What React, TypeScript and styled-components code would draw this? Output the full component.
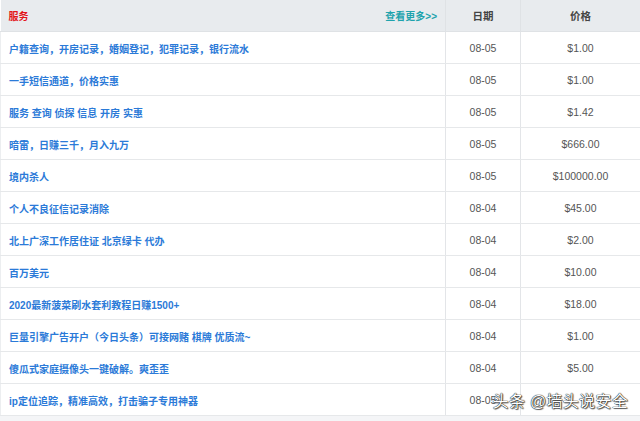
import React from 'react';
import styled, { createGlobalStyle } from 'styled-components';

const GlobalStyle = createGlobalStyle`
  html, body {
    margin: 0;
    padding: 0;
    background: #f4f5f7;
    font-family: "Liberation Sans", "Noto Sans CJK SC", sans-serif;
  }
`;

interface Item {
    title: string;
    date: string;
    price: string;
}

const items: Item[] = [
    { title: '户籍查询，开房记录，婚姻登记，犯罪记录，银行流水', date: '08-05', price: '$1.00' },
    { title: '一手短信通道，价格实惠', date: '08-05', price: '$1.00' },
    { title: '服务 查询 侦探 信息 开房 实惠', date: '08-05', price: '$1.42' },
    { title: '暗雷，日赚三千，月入九万', date: '08-05', price: '$666.00' },
    { title: '境内杀人', date: '08-05', price: '$100000.00' },
    { title: '个人不良征信记录消除', date: '08-04', price: '$45.00' },
    { title: '北上广深工作居住证 北京绿卡 代办', date: '08-04', price: '$2.00' },
    { title: '百万美元', date: '08-04', price: '$10.00' },
    { title: '2020最新菠菜刷水套利教程日赚1500+', date: '08-04', price: '$18.00' },
    { title: '巨量引擎广告开户（今日头条）可接网赌 棋牌 优质流~', date: '08-04', price: '$1.00' },
    { title: '傻瓜式家庭摄像头一键破解。爽歪歪', date: '08-04', price: '$5.00' },
    { title: 'ip定位追踪，精准高效，打击骗子专用神器', date: '08-05', price: '' },
];

export default function App() {
    return (
        <Page>
            <GlobalStyle />
            <Table>
                <colgroup>
                    <col style={{ width: 445 }} />
                    <col style={{ width: 75 }} />
                    <col />
                </colgroup>
                <thead>
                    <tr>
                        <HeadCell>
                            <HeadRow>
                                <Category>服务</Category>
                                <More href="#">查看更多&gt;&gt;</More>
                            </HeadRow>
                        </HeadCell>
                        <HeadCell center>日期</HeadCell>
                        <HeadCell center>价格</HeadCell>
                    </tr>
                </thead>
                <tbody>
                    {items.map((item, i) => (
                        <tr key={i}>
                            <TitleCell><TitleLink href="#">{item.title}</TitleLink></TitleCell>
                            <ValueCell>{item.date}</ValueCell>
                            <ValueCell>{item.price}</ValueCell>
                        </tr>
                    ))}
                </tbody>
            </Table>
            <Watermark>头条 @墙头说安全</Watermark>
        </Page>
    );
}

const Page = styled.div`
  position: relative;
  width: 640px;
  height: 421px;
  overflow: hidden;
`;

const Table = styled.table`
  width: 640px;
  border-collapse: collapse;
  table-layout: fixed;
  background: #fff;
`;

const HeadCell = styled.th<{center?: boolean}>`
  height: 31px;
  padding: 0 8px;
  background: #e8ebee;
  border-left: 1px solid #dfe2e5;
  border-bottom: 1px solid #dfe2e5;
  font-size: 10.5px;
  font-weight: bold;
  color: #444;
  text-align: ${({center}) => center ? 'center' : 'left'};
  &:first-child { border-left: none; }
`;

const HeadRow = styled.div`
  display: flex;
  align-items: center;
  justify-content: space-between;
  padding-right: 0;
`;

const Category = styled.span`
  color: #e3141b;
  font-size: 10px;
  font-weight: bold;
`;

const More = styled.a`
  color: #1fa3ad;
  font-size: 10px;
  font-weight: bold;
  text-decoration: none;
`;

const TitleCell = styled.td`
  height: 31px;
  padding: 0 8px;
  border-bottom: 1px solid #e6e8ea;
  border-left: 1px solid #eceef0;
  white-space: nowrap;
`;

const TitleLink = styled.a`
  color: #2b7ad8;
  font-size: 10px;
  font-weight: bold;
  text-decoration: none;
`;

const ValueCell = styled.td`
  height: 31px;
  padding: 0;
  border-bottom: 1px solid #e6e8ea;
  border-left: 1px solid #e3e5e8;
  text-align: center;
  font-size: 10.5px;
  color: #555;
`;

const Watermark = styled.div`
  position: absolute;
  right: 12px;
  bottom: 9px;
  font-size: 16px;
  color: #fff;
  letter-spacing: 0.3px;
  text-shadow: 0 0 1px #000, 0 0 1px #000, 1px 1px 1px rgba(0,0,0,0.6);
`;
